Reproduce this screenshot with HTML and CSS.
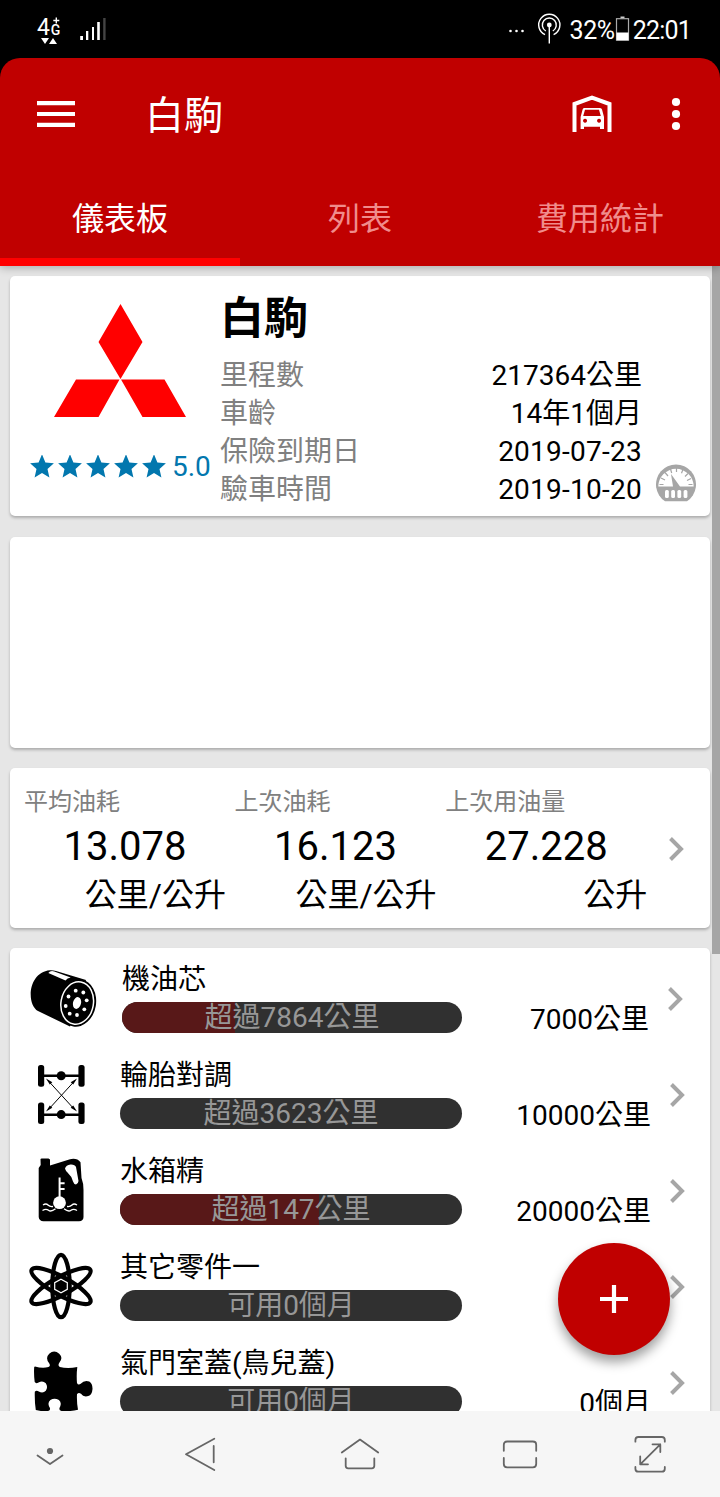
FILE: index.html
```html
<!DOCTYPE html>
<html lang="zh-Hant">
<head>
<meta charset="utf-8">
<title>白駒</title>
<link rel="stylesheet" href="styles.css">
</head>
<body>
<div class="phone">
  <div class="status">
    <svg class="status-net" viewBox="0 0 80 58" width="80" height="58">
      <text x="6" y="35" class="net-big">4</text>
      <text x="19.800" y="35" class="net-small">G</text>
      <path d="M25.300 17.500v6M22.300 20.500h6" stroke="#fff" stroke-width="1.400"/>
      <path d="M10 38h8l-4 6zM18 44h8l-4-6z" fill="#fff"/>
      <path d="M49.200 36h2.800v4h-2.800zM55 31h2.300v9H55zM61 27h2v13h-2zM66.200 22h2.600v18h-2.600z" fill="#fff"/>
      <path d="M72.200 18h2.400v22h-2.400z" fill="#444"/>
    </svg>
    <div class="status-right">
      <svg class="cast" viewBox="0 0 60 58" width="60" height="58">
        <g fill="#fff"><circle cx="3.500" cy="31" r="1.300"/><circle cx="9.500" cy="31" r="1.300"/><circle cx="15.500" cy="31" r="1.300"/><circle cx="42.300" cy="25" r="2.400"/></g>
        <g fill="none" stroke="#fff" stroke-width="1.400"><path d="M42.300 25v18.500" /><path d="M38 34.600a10.600 10.600 0 1 1 8.600 0"/><path d="M38.800 31a7 7 0 1 1 7 0"/></g>
      </svg>
      <span class="status-text">32%</span>
      <svg viewBox="0 0 16 58" width="16" height="58">
        <path d="M5.500 16.500h4v2h-4z" fill="#ccc"/><rect x="1.500" y="18.700" width="12" height="21.500" fill="none" stroke="#aaa" stroke-width="1.200"/><path d="M1.500 32.500h12v7.800h-12z" fill="#fff"/>
      </svg>
      <span class="status-text clock">22:01</span>
    </div>
  </div>

  <div class="header">
    <div class="appbar">
      <svg class="menu" viewBox="0 0 38 26" width="38" height="26"><path d="M0 2.200h38M0 13h38M0 23.800h38" stroke="#fff" stroke-width="4.200"/></svg>
      <h1 class="title">白駒</h1>
      <svg class="garage" viewBox="0 0 40 38" width="40" height="38">
        <path d="M2.500 37V9L20 2.700 37.500 9v28" fill="none" stroke="#fff" stroke-width="4"/>
        <path fill="#fff" fill-rule="evenodd" d="M12 13h16q1.600 0 2 1.500l2 7.500v12h-4v-2.300H12V34H8.600V22l2-7.500Q11 13 12 13zm1 1.800L11.200 21h17.600L27 14.800zM13 23.800a2 2 0 1 0 .1 0zM27 23.800a2 2 0 1 0 .1 0z"/>
      </svg>
      <svg class="dots" viewBox="0 0 10 34" width="10" height="34"><g fill="#fff"><circle cx="5" cy="5" r="4.100"/><circle cx="5" cy="17" r="4.100"/><circle cx="5" cy="29" r="4.100"/></g></svg>
    </div>
    <div class="tabs">
      <div class="tab tab-active">儀表板</div>
      <div class="tab">列表</div>
      <div class="tab">費用統計</div>
    </div>
  </div>

  <div class="content">
    <div class="card vehicle">
      <div class="brand">
        <svg class="logo" viewBox="0 0 132 114" width="132" height="114"><path fill="#f00" d="M66.500 0l22 38-22 37-22-37zM22 75.500h43.500L44.500 113H0zM67 75.500h43.500L132 113H88.500z"/></svg>
        <div class="rating">
          <svg viewBox="0 0 136 24" width="136" height="24">
            <defs><path id="star" d="M0-12.200l3.400 8.100 8.500.8-6.400 5.700 1.900 8.600L0 6.500-7.400 11l1.900-8.600-6.400-5.700 8.500-.8z"/></defs>
            <g fill="#0277ae"><use href="#star" x="12" y="11.500"/><use href="#star" x="40" y="11.500"/><use href="#star" x="68" y="11.500"/><use href="#star" x="96" y="11.500"/><use href="#star" x="124" y="11.500"/></g>
          </svg>
          <span>5.0</span>
        </div>
      </div>
      <div class="facts">
        <h2 class="name">白駒</h2>
        <div class="fact"><span>里程數</span><b>217364公里</b></div>
        <div class="fact"><span>車齡</span><b>14年1個月</b></div>
        <div class="fact"><span>保險到期日</span><b class="date">2019-07-23</b></div>
        <div class="fact"><span>驗車時間</span><b class="date">2019-10-20</b></div>
      </div>
      <svg class="gauge" viewBox="0 0 40 38" width="40" height="38">
        <path fill="#a6a6a6" d="M9 37.200A20 20 0 1 1 31 37.200z"/>
        <path fill="#fff" d="M2.300 22.500a17.700 17.700 0 0 1 35.400 0H24L15 10l2 12.500z"/>
        <path d="M3.500 20.500h4M5 14l4 2M9 8.500l3 3.500M14.500 5l1.200 4M20.500 4v4M27 5.200l-1.500 4M32 9.500l-3 3M35 14.500l-4 2M36.500 20.500h-4" stroke="#a6a6a6" stroke-width="1.200"/>
        <g fill="#fff"><rect x="9" y="26" width="3.800" height="8" rx="1.500"/><rect x="15.200" y="26" width="3.800" height="8" rx="1.500"/><rect x="21.400" y="26" width="3.800" height="8" rx="1.500"/><rect x="27.600" y="26" width="3.800" height="8" rx="1.500"/></g>
      </svg>
    </div>

    <div class="card blank"></div>

    <div class="card metrics">
      <div class="metric"><span class="m-label">平均油耗</span><span class="m-value">13.078</span><span class="m-unit">公里/公升</span></div>
      <div class="metric"><span class="m-label">上次油耗</span><span class="m-value">16.123</span><span class="m-unit">公里/公升</span></div>
      <div class="metric"><span class="m-label">上次用油量</span><span class="m-value">27.228</span><span class="m-unit">公升</span></div>
      <svg class="chevron" viewBox="0 0 16 26" width="16" height="26"><path d="M2.500 2.500l10.500 10.500-10.500 10.500"/></svg>
    </div>

    <div class="card list">
      <div class="row row-first">
        <svg class="icon" viewBox="0 0 84 96" width="84" height="96">
          <path d="M50 78.500L18 63C6 56 8 24 30 22.200q3-.2 6 .8L66 32z"/>
          <ellipse cx="57.500" cy="55" rx="18.500" ry="23.800" transform="rotate(10 57.500 55)"/>
          <ellipse cx="57.200" cy="55" rx="16.200" ry="21.300" transform="rotate(10 57.200 55)" fill="none" stroke="#fff" stroke-width="1.500"/>
          <path d="M28.300 25q2-2.800 6-1.600l16.400 6.200q-3.500.6-5.200 3z" fill="#fff"/>
          <g fill="#fff"><ellipse cx="57" cy="55" rx="4" ry="6" transform="rotate(14 57 55)"/><circle cx="55.700" cy="42.700" r="1.900"/><circle cx="63.300" cy="44.500" r="1.900"/><circle cx="66.700" cy="52.300" r="1.900"/><circle cx="64.300" cy="61.300" r="1.900"/><circle cx="57" cy="67" r="1.900"/><circle cx="49.700" cy="65.700" r="1.900"/><circle cx="45.700" cy="58" r="1.900"/><circle cx="48.500" cy="48.500" r="1.900"/></g>
        </svg>
        <div class="part"><span class="part-name">機油芯</span><div class="bar"><i class="fill" style="width:33.300%"></i><span>超過7864公里</span></div></div>
        <span class="due">7000公里</span>
        <svg class="chevron" viewBox="0 0 16 26" width="16" height="26"><path d="M2.500 2.500l10.500 10.500-10.500 10.500"/></svg>
      </div>
      <div class="row">
        <svg class="icon" viewBox="0 0 84 96" width="84" height="96">
          <rect x="18" y="21" width="6.200" height="21.700" rx="2.500"/><rect x="58.400" y="21" width="6.200" height="21.700" rx="2.500"/><rect x="18" y="58.400" width="6.200" height="21.700" rx="2.500"/><rect x="58.400" y="58.400" width="6.200" height="21.700" rx="2.500"/>
          <path d="M21 30.500h40v2.600H21zM21 69.400h40V72H21z"/><circle cx="41.200" cy="31.700" r="4.500"/><circle cx="41.200" cy="70.600" r="4.500"/>
          <path d="M28 36.500l27 29.500M55 36.500L28 66" stroke="#000" stroke-width="1"/>
          <path d="M26 34.500l6.300 3.800-2.500 2.300zM57 34.500l-6.300 3.800 2.500 2.300zM26 67.500l6.300-3.800-2.500-2.300zM57 67.500l-6.300-3.800 2.500-2.300z"/>
        </svg>
        <div class="part"><span class="part-name">輪胎對調</span><div class="bar"><span>超過3623公里</span></div></div>
        <span class="due">10000公里</span>
        <svg class="chevron" viewBox="0 0 16 26" width="16" height="26"><path d="M2.500 2.500l10.500 10.500-10.500 10.500"/></svg>
      </div>
      <div class="row">
        <svg class="icon" viewBox="0 0 84 96" width="84" height="96">
          <path d="M20.500 19l1-.5h7l1.500 1v6L50 19.200q7-1.500 10.500 3L61.500 38q2 5 2 12v27q0 4-4.500 4.300H23.500Q19 81 18.700 77V28l2-3z"/>
          <path fill="#fff" d="M45 28.500q1-3.500 5.500-4 4.500-.2 5.500 2.500L58.500 41q-.3 3-2.500 3.500-2 0-3-3-1.500-5.500-5.500-9-2-1.800-2.500-4z"/>
          <circle cx="39.500" cy="62.700" r="6.400" fill="#fff"/>
          <path d="M39.600 37.500V60M40 43.200h4.600M40 49h4.600" stroke="#fff" stroke-width="2" fill="none"/>
          <path d="M23 65q3-2 5 0t5 1.500M22.500 70.500q3.500-2.200 6-.2t7-1.500M57 65q-3-2-5 0t-5 1.500M57 70.500q-3.500-2.200-6-.2t-7-1.500" stroke="#fff" stroke-width="1.400" fill="none"/>
        </svg>
        <div class="part"><span class="part-name">水箱精</span><div class="bar"><i class="fill" style="width:58.300%"></i><span>超過147公里</span></div></div>
        <span class="due">20000公里</span>
        <svg class="chevron" viewBox="0 0 16 26" width="16" height="26"><path d="M2.500 2.500l10.500 10.500-10.500 10.500"/></svg>
      </div>
      <div class="row">
        <svg class="icon" viewBox="0 0 84 96" width="84" height="96">
          <g fill="none" stroke="#000" stroke-width="4.200"><ellipse cx="41" cy="50" rx="8.700" ry="31.200"/><ellipse cx="41" cy="50" rx="9" ry="33.500" transform="rotate(61 41 50)"/><ellipse cx="41" cy="50" rx="9" ry="33.500" transform="rotate(-61 41 50)"/></g>
          <path d="M41 39l10 5.500v11L41 61l-10-5.500v-11z"/>
          <path d="M41 43.200l6.300 3.400v6.800L41 56.800l-6.300-3.400v-6.800z" fill="none" stroke="#fff" stroke-width="1.200"/>
        </svg>
        <div class="part"><span class="part-name">其它零件一</span><div class="bar"><span>可用0個月</span></div></div>
        <span class="due"></span>
        <svg class="chevron" viewBox="0 0 16 26" width="16" height="26"><path d="M2.500 2.500l10.500 10.500-10.500 10.500"/></svg>
      </div>
      <div class="row">
        <svg class="icon" viewBox="0 0 84 96" width="84" height="96">
          <path d="M15 34.500q7 2 13.500.6 2.500-1.200.5-4.200-4-5 .2-9.200 5-4.200 10 0 4.200 4 .4 8.600-2.300 3.200.2 4.600 8 2 17.500 0-1 8-.3 16 1.200 2.600 3.700.8 3.500-4 8.600-2.300 3.300 2 3.200 7.500-.4 5.800-4.200 7.200-5 1.300-7.300-2.300-2.400-2-4 .5-.4 8 1 15.500-7 1.800-16.500 1.200-3.500-.8-1.300-4.500 1.600-4-1.300-6.500-4.400-2.600-8.500 0-3 2.500-1.300 6.500 2.400 3.500-1 4.500-6.300.7-12.300-1-1.300-8-1-18.300 1.500-1.700 4-.2 4 2.300 7-.7 2.500-3.700 0-7.500-3.200-3.200-7.300-.7-2.500 1.500-3.800-.5-1-7.500-.5-15.200z"/>
        </svg>
        <div class="part"><span class="part-name">氣門室蓋(鳥兒蓋)</span><div class="bar"><span>可用0個月</span></div></div>
        <span class="due">0個月</span>
        <svg class="chevron" viewBox="0 0 16 26" width="16" height="26"><path d="M2.500 2.500l10.500 10.500-10.500 10.500"/></svg>
      </div>
    </div>
    <div class="scrollbar"></div>
    <div class="fab"><svg viewBox="0 0 28 28" width="28" height="28"><path d="M14 0v28M0 14h28" stroke="#fff" stroke-width="4.200"/></svg></div>
  </div>

  <div class="nav">
    <svg viewBox="0 0 40 40" width="40" height="40"><path d="M7.500 21.500L20 30l12.500-8.500"/><circle cx="20" cy="17" r="3.100" class="nav-dot"/></svg>
    <svg viewBox="0 0 40 40" width="40" height="40"><path d="M34.300 4.700L6 20.200 34.300 36M33.700 12v16.300"/></svg>
    <svg viewBox="0 0 40 40" width="40" height="40"><path d="M1.800 18.600L20 5.600l18.200 13M5.700 24.300v7.500q0 2.500 2.500 2.500h23.600q2.500 0 2.500-2.500v-7.500"/></svg>
    <svg viewBox="0 0 40 40" width="40" height="40"><path d="M3.800 16.800v-6q0-3.300 3.300-3.300h25.800q3.300 0 3.300 3.300v6M3.800 24v6q0 3.300 3.300 3.300h25.800q3.300 0 3.300-3.300v-6"/></svg>
    <svg viewBox="0 0 40 40" width="40" height="40"><path d="M5.400 7.700V6q0-3 3-3h23.400q3 0 3 3v1.700M5.400 33v1.700q0 3 3 3h23.400q3 0 3-3V33M10.200 30.300L30.300 10.300M22.500 10.300h7.800v7.800M10.200 22.500v7.800H18"/></svg>
  </div>
</div>
</body>
</html>
```
FILE: styles.css
```css
* { box-sizing: border-box; }
body { margin: 0; background: #000; font-family: Roboto, "Noto Sans CJK TC", sans-serif; color: #000; }
svg { display: block; flex: none; }
h1, h2, b { margin: 0; font-weight: 400; }
.phone { width: 720px; height: 1497px; display: flex; flex-direction: column; overflow: hidden; white-space: nowrap; }

.status { height: 58px; flex: none; display: flex; justify-content: space-between; padding: 0 29px 0 31px; color: #fff; }
.net-big { font-size: 23px; fill: #fff; }
.net-small { font-size: 14px; font-weight: 500; fill: #fff; }
.status-right { display: flex; }
.cast { margin-right: 3px; }
.status-text { font-size: 25px; line-height: 61px; letter-spacing: -0.4px; }
.clock { margin-left: 2px; letter-spacing: -0.800px; }

.header { height: 208px; flex: none; background: #c00000; border-radius: 20px 20px 0 0; color: #fff; position: relative; z-index: 2; box-shadow: 0 2px 8px rgba(0,0,0,.25); }
.appbar { height: 112px; display: flex; align-items: center; padding: 0 39px 0 37px; }
.title { font-size: 39px; line-height: 112px; margin-left: 70px; padding-top: 3px; flex: 1; }
.dots { margin-left: 59px; }
.tabs { height: 96px; display: grid; grid-template-columns: repeat(3, 240px); }
.tab { height: 96px; font-size: 32px; line-height: 98px; text-align: center; color: #f08c8c; }
.tab-active { color: #fff; border-bottom: 8px solid #f00; }

.content { flex: 1; min-height: 0; overflow: hidden; position: relative; background: #e6e6e6; padding: 10px 10px 0; display: flex; flex-direction: column; gap: 20px; }
.card { flex: none; background: #fff; border-radius: 5px; box-shadow: 0 2px 3px rgba(0,0,0,.25); }

.vehicle { height: 240px; display: flex; padding-left: 20px; margin-bottom: 1px; }
.brand { width: 190px; padding-top: 28px; }
.logo { margin-left: 24.300px; }
.rating { display: flex; align-items: center; gap: 6px; margin-top: 28px; font-size: 28px; line-height: 42px; color: #0277ae; }
.facts { width: 422px; padding-top: 5px; }
.name { font-size: 44px; font-weight: 700; line-height: 76px; }
.fact { display: flex; justify-content: space-between; font-size: 28px; line-height: 38px; color: #808080; }
.fact b { color: #000; }
.fact .date { letter-spacing: .250px; }
.gauge { margin: 188px 0 0 14px; }

.blank { height: 211px; }

.metrics { height: 160px; display: flex; padding: 18px 0 0 14px; }
.metric { width: 202px; margin-right: 8.600px; display: flex; flex-direction: column; }
.m-label { font-size: 24px; line-height: 32px; color: #808080; margin-bottom: 2px; }
.m-value { font-size: 40px; line-height: 54px; text-align: center; }
.m-unit { font-size: 32px; line-height: 42px; text-align: right; }
.metrics .chevron { margin: 50px 0 0 12.500px; }
.chevron path { fill: none; stroke: #a6a6a6; stroke-width: 4; }

.list { height: 600px; }
.row { height: 96px; display: flex; padding-left: 10px; }
.icon { margin-right: 16px; }
.part { width: 342px; padding-top: 13px; }
.part-name { display: block; font-size: 28px; line-height: 38px; margin-bottom: 3px; }
.bar { height: 31px; border-radius: 16px; background: #303030; position: relative; overflow: hidden; display: flex; justify-content: center; font-size: 28px; line-height: 31px; color: #979797; }
.bar span { position: relative; }
.fill { position: absolute; left: 0; top: 0; bottom: 0; background: #581818; }
.due { width: 189px; padding-top: 53px; font-size: 28px; line-height: 38px; text-align: right; }
.row .chevron { margin: 38px 0 0 18px; }
.row-first .icon { margin-right: 18px; }
.row-first .part { width: 340px; }
.row-first .due { width: 187px; }

.scrollbar { position: absolute; right: 0; top: 0; width: 8px; height: 688px; background: #a6a6a6; }
.fab { position: absolute; left: 558px; top: 977px; width: 112px; height: 112px; border-radius: 50%; background: #c00000; display: flex; align-items: center; justify-content: center; box-shadow: 0 7px 12px rgba(0,0,0,.38); }

.nav { height: 86px; flex: none; background: #f6f6f6; display: grid; grid-template-columns: 100px 200px 120px 200px 60px; align-items: center; justify-items: center; }
.nav path { fill: none; stroke: #666; stroke-width: 1.800; stroke-linecap: round; stroke-linejoin: round; }
.nav-dot { fill: #666; }
```
